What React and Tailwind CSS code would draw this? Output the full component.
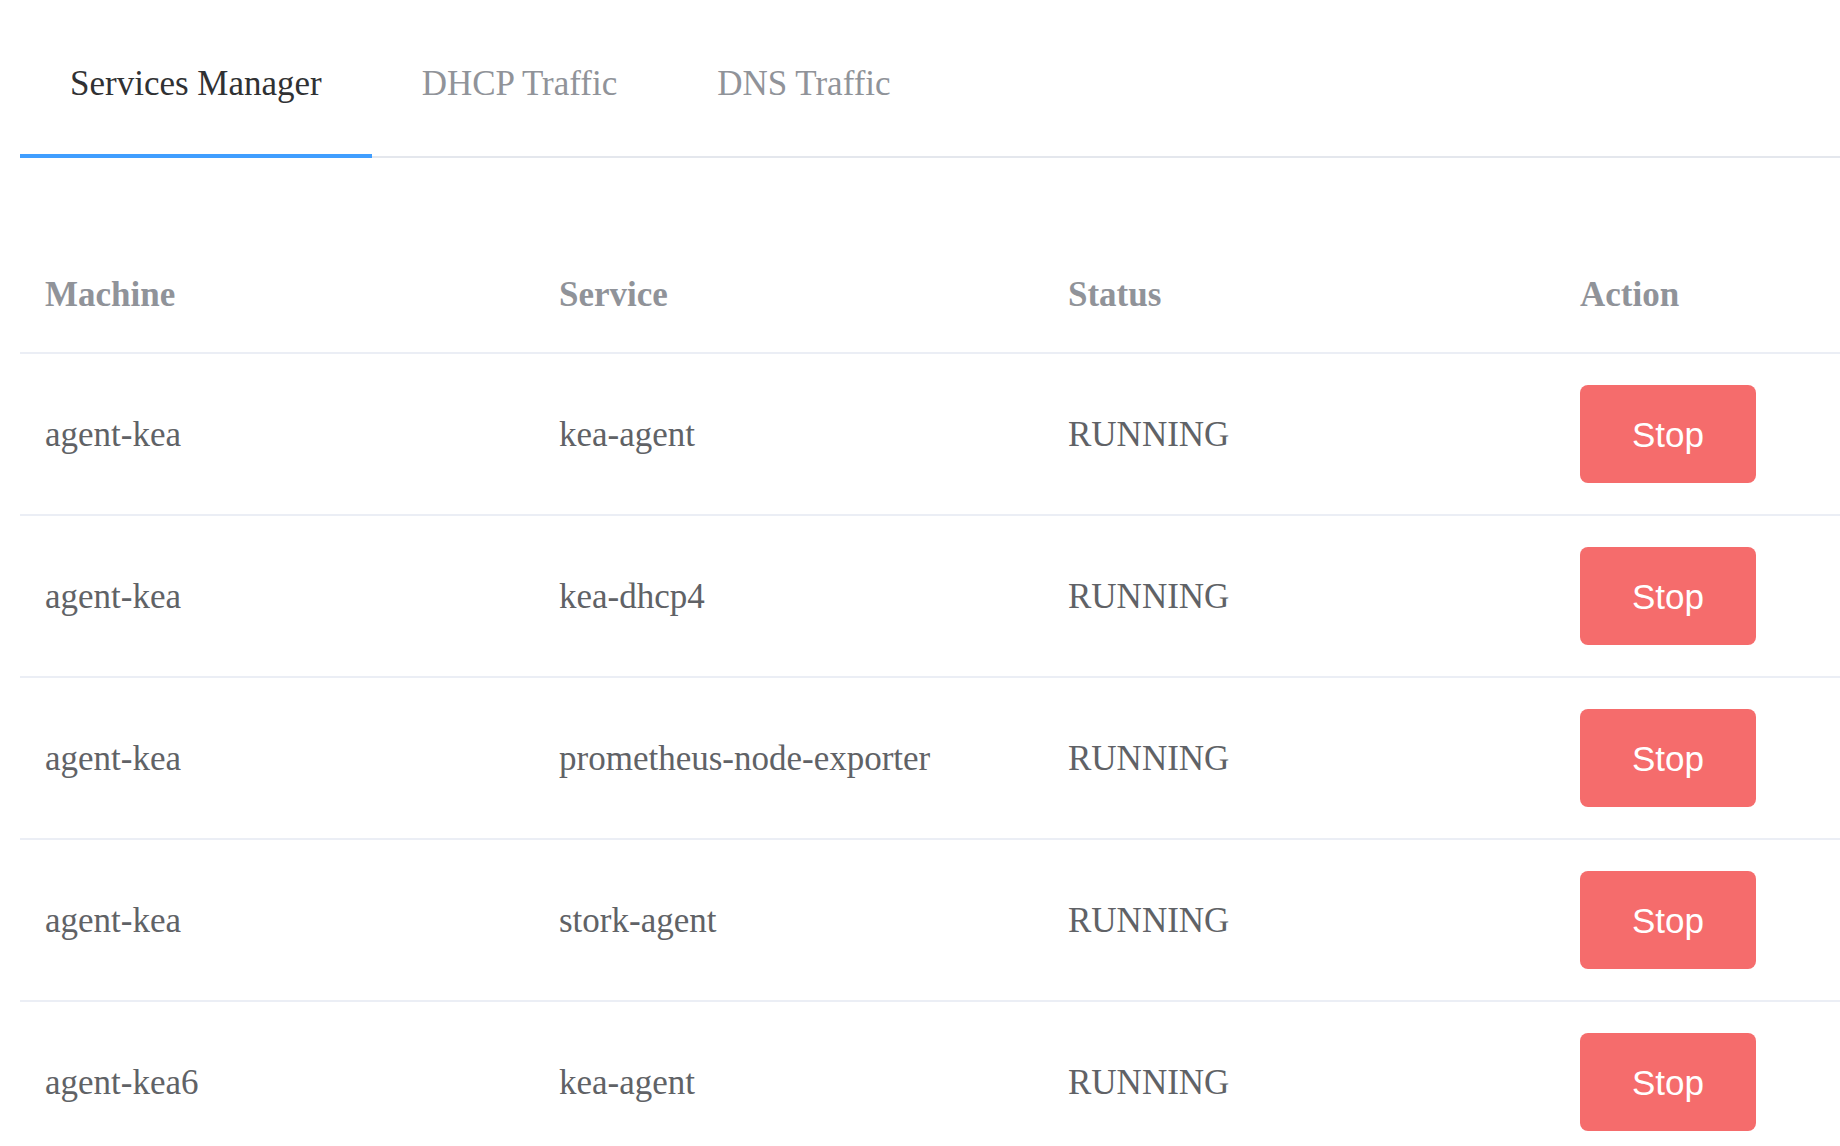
import React from "react";

const rows = [
  { machine: "agent-kea", service: "kea-agent", status: "RUNNING" },
  { machine: "agent-kea", service: "kea-dhcp4", status: "RUNNING" },
  { machine: "agent-kea", service: "prometheus-node-exporter", status: "RUNNING" },
  { machine: "agent-kea", service: "stork-agent", status: "RUNNING" },
  { machine: "agent-kea6", service: "kea-agent", status: "RUNNING" },
];

const tabs = ["Services Manager", "DHCP Traffic", "DNS Traffic"];

const cols = "grid grid-cols-[514px_509px_512px_1fr]";

function Tabs() {
  return (
    <div className="ml-[20px] flex border-b-2 border-[#e4e7ed]">
      {tabs.map((t, i) => (
        <div
          key={t}
          className={
            i === 0
              ? "px-[50px] pt-[34px] pb-[20px] leading-[100px] text-[35px] text-[#303133] border-b-4 border-[#409eff] -mb-[2px]"
              : "px-[50px] pt-[34px] pb-[20px] leading-[100px] text-[35px] text-[#909399] border-b-4 border-transparent -mb-[2px]"
          }
        >
          {t}
        </div>
      ))}
    </div>
  );
}

function ServicesTable() {
  return (
    <div className="ml-[20px] mt-[78px]">
      <div className={`${cols} h-[118px] border-b-2 border-[#ebeef5] items-center text-[35px] font-bold text-[#909399] leading-[57px]`}>
        <div className="pl-[25px]">Machine</div>
        <div className="pl-[25px]">Service</div>
        <div className="pl-[25px]">Status</div>
        <div className="pl-[25px]">Action</div>
      </div>
      {rows.map((r, i) => (
        <div
          key={i}
          className={`${cols} h-[162px] border-b-2 border-[#ebeef5] items-center text-[35px] text-[#606266] leading-[57px]`}
        >
          <div className="pl-[25px]">{r.machine}</div>
          <div className="pl-[25px]">{r.service}</div>
          <div className="pl-[25px]">{r.status}</div>
          <div className="pl-[25px]">
            <button className="w-[176px] h-[98px] rounded-[8px] bg-[#f56c6c] text-white text-[35px] leading-none font-['Liberation_Sans',Arial,sans-serif]">
              Stop
            </button>
          </div>
        </div>
      ))}
    </div>
  );
}

export default function App() {
  return (
    <div className="min-h-screen bg-white overflow-hidden font-['Liberation_Serif','Times_New_Roman',serif]">
      <Tabs />
      <ServicesTable />
    </div>
  );
}
